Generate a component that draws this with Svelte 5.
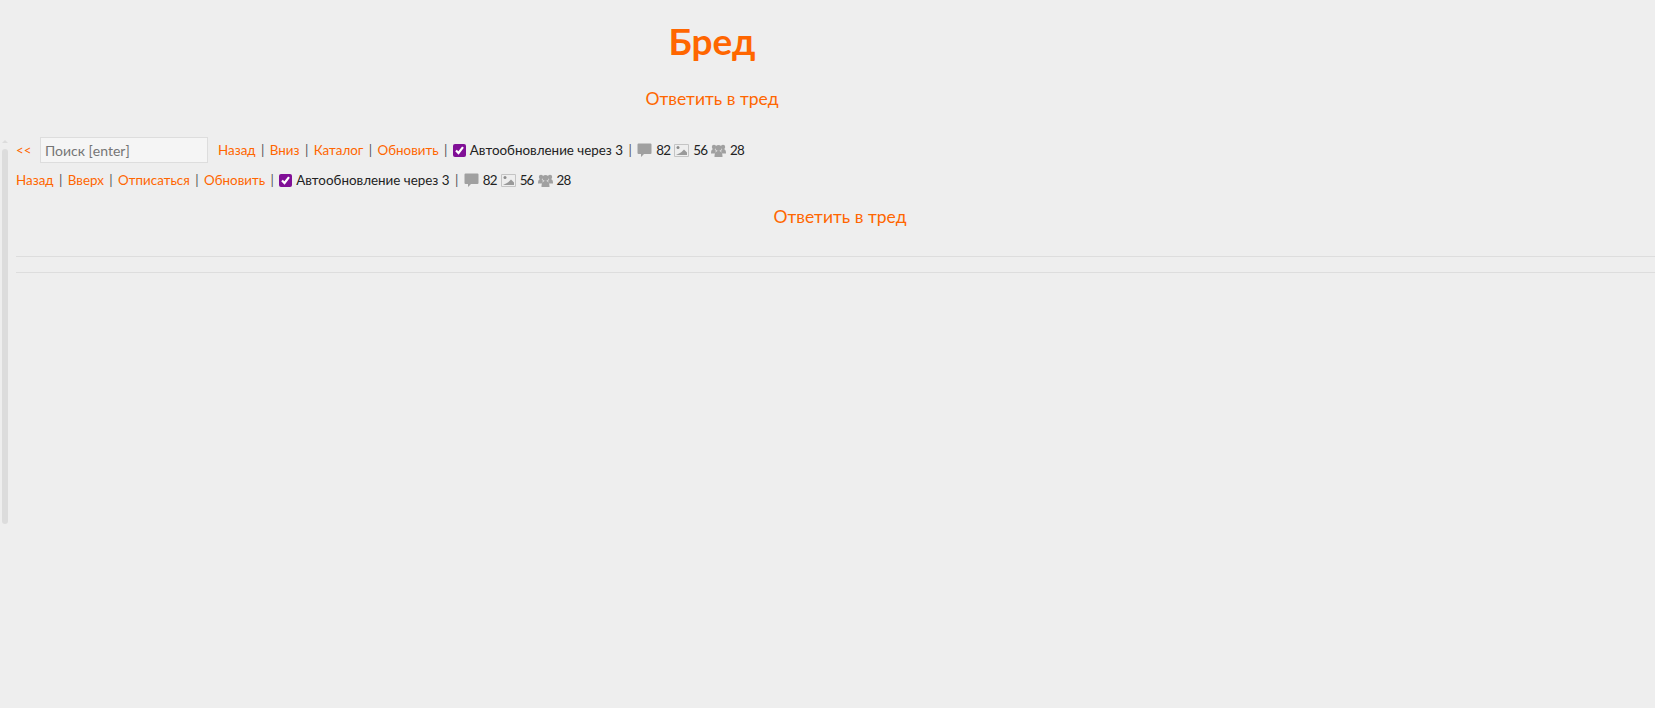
<script>
	const stats = { posts: 82, images: 56, posters: 28 };
	const topLinks = ['Назад', 'Вниз', 'Каталог', 'Обновить'];
	const bottomLinks = ['Назад', 'Вверх', 'Отписаться', 'Обновить'];
</script>

{#snippet stat()}
	<span class="stats">
		<svg class="ico" width="15" height="15" viewBox="0 0 15 15"><path d="M1.500 .5h12a1 1 0 0 1 1 1v8.500a1 1 0 0 1-1 1H7l-3 3v-3H1.500a1 1 0 0 1-1-1V1.500a1 1 0 0 1 1-1z" fill="#a0a0a0"/></svg>
		<span class="num">{stats.posts}</span>
		<svg class="ico" width="15" height="15" viewBox="0 0 15 15"><path d="M.5 1.500h14v12H.5z" fill="none" stroke="#c4c4c4"/><circle cx="4" cy="4.500" r="1.500" fill="#8c8c8c"/><path d="M2 12h11V9.500L10 6.500 7.500 9 6 10z" fill="#9a9a9a"/></svg>
		<span class="num">{stats.images}</span>
		<svg class="ico" width="15" height="15" viewBox="0 0 15 15"><g fill="#a0a0a0"><circle cx="7.500" cy="5" r="3"/><circle cx="3" cy="4" r="2.200"/><circle cx="12" cy="4" r="2.200"/><path d="M3.500 14c0-4 1-6 4-6s4 2 4 6z"/><path d="M0 10.500C0 7 1 6 3 6s2 1.500 1.500 4.500zM15 10.500C15 7 14 6 12 6s-2 1.500-1.500 4.500z"/></g></svg>
		<span class="num">{stats.posters}</span>
	</span>
{/snippet}

{#snippet autoRefresh()}
	<span class="auto">
		<span class="check">
			<svg width="13" height="13" viewBox="0 0 13 13"><path d="M3 6.500l2.500 2.500L10 3.200" fill="none" stroke="#fff" stroke-width="2.200"/></svg>
		</span>
		Автообновление через 3
	</span>
	<span class="sep">|</span>
{/snippet}

<div class="scrollbar"><span class="arrow"></span><span class="thumb"></span></div>

<header class="head">
	<h1>Бред</h1>
	<a class="reply" href="#top">Ответить в тред</a>
</header>

<main class="thread">
	<div class="bar bar-top">
		<a class="back" href="#top">&lt;&lt;</a>
		<input class="search" placeholder="Поиск [enter]" />
		<nav class="links">
			{#each topLinks as link, i}
				{#if i > 0}<span class="sep">|</span>{/if}
				<a href="#top">{link}</a>
			{/each}
			<span class="sep">|</span>
			{@render autoRefresh()}
			{@render stat()}
		</nav>
	</div>
	<div class="bar bar-bottom">
		<nav class="links">
			{#each bottomLinks as link, i}
				{#if i > 0}<span class="sep">|</span>{/if}
				<a href="#top">{link}</a>
			{/each}
			<span class="sep">|</span>
			{@render autoRefresh()}
			{@render stat()}
		</nav>
	</div>
	<div class="reply-wrap"><a class="reply" href="#top">Ответить в тред</a></div>
	<hr />
	<hr class="second" />
</main>

<style>
	:global(body) {
		background: #eeeeee;
		color: #222;
		font-family: Lato, "Noto Sans", sans-serif;
		font-size: 13.4px;
		overflow: hidden;
	}

	a {
		color: #ff6600;
		text-decoration: none;
	}

	.scrollbar {
		position: absolute;
		left: 2px;
		top: 140px;
		width: 6px;
	}

	.arrow {
		display: block;
		width: 0;
		margin: 0 auto 6px;
		border: 3px solid transparent;
		border-top: 0;
		border-bottom: 3px solid #dcdcdc;
	}

	.thumb {
		display: block;
		height: 375px;
		background: #dcdcdc;
		border-radius: 3px;
	}

	.head {
		width: 1424px;
		text-align: center;
		padding-top: 16px;
	}

	h1 {
		margin: 0 0 22px;
		font-size: 37px;
		line-height: 50px;
		font-weight: 700;
		color: #ff6600;
	}

	.reply {
		font-size: 17.5px;
		line-height: 22px;
		font-weight: 400;
	}

	.thread {
		width: 1648px;
		margin-left: 16px;
	}

	.bar {
		display: flex;
		align-items: center;
		height: 30px;
	}

	.bar-top {
		margin-top: 25px;
	}

	.back {
		width: 24px;
	}

	.search {
		box-sizing: border-box;
		width: 168px;
		height: 26px;
		margin-right: 10px;
		padding: 0 4px;
		border: 1px solid #dddddd;
		background: #f5f5f5;
		font: inherit;
		font-size: 14px;
		color: #222;
	}

	.search::placeholder {
		color: #757575;
	}

	.links {
		display: flex;
		align-items: center;
		gap: 5.4px;
	}

	.sep {
		color: #555;
	}

	.auto,
	.stats {
		display: flex;
		align-items: center;
	}

	.auto {
		gap: 4px;
	}

	.stats {
		gap: 4px;
	}

	.num {
		letter-spacing: -0.8px;
	}

	.check {
		display: flex;
		width: 13px;
		height: 13px;
		border-radius: 2px;
		background: #800f96;
	}

	.ico {
		flex: none;
	}

	.reply-wrap {
		margin-top: 11px;
		text-align: center;
	}

	hr {
		margin: 28px 0 0;
		border: 0;
		border-top: 1px solid #dddddd;
	}

	.second {
		margin-top: 15px;
	}
</style>
